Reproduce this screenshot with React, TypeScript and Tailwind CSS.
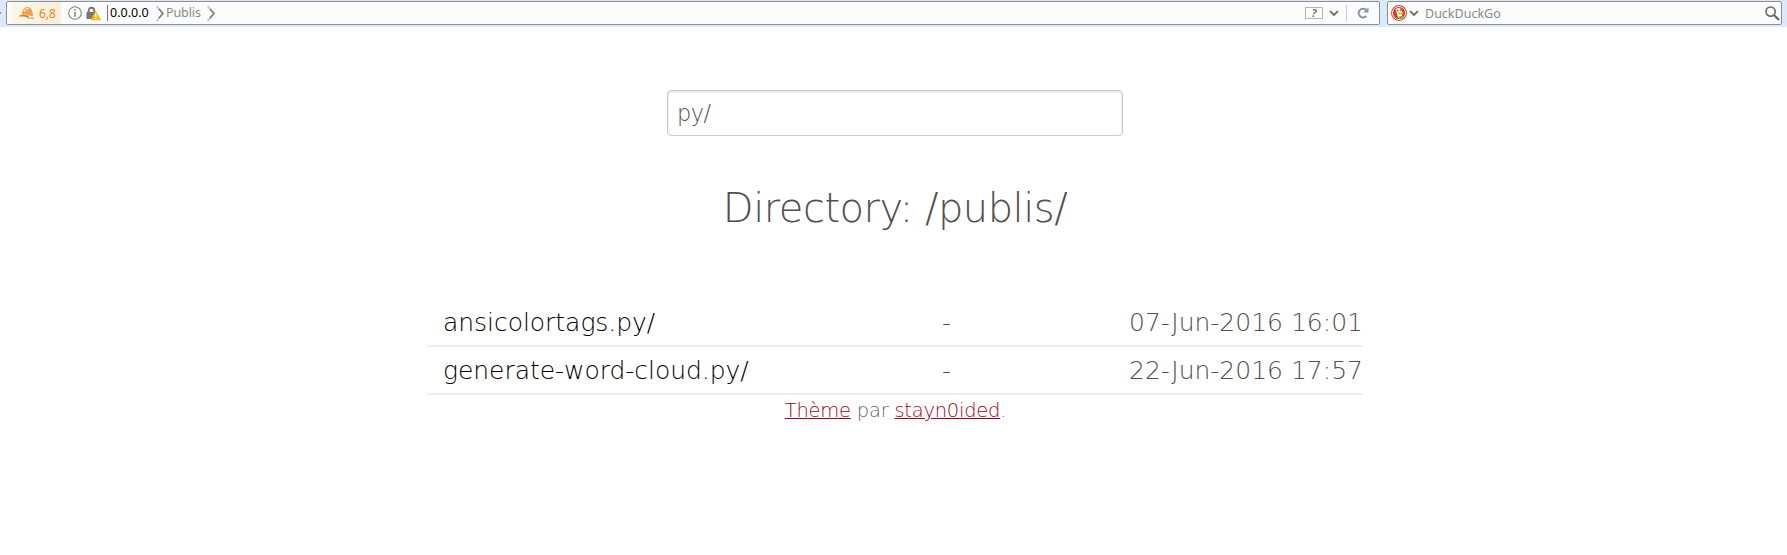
import React from "react";

const rows = [
  { name: "ansicolortags.py/", size: "-", date: "07-Jun-2016 16:01" },
  { name: "generate-word-cloud.py/", size: "-", date: "22-Jun-2016 17:57" },
];

function HardHat() {
  return (
    <svg width="16" height="16" viewBox="0 0 16 16">
      <path d="M3 9.500C3.500 4 6 2 8.500 2C12 2 14 5.500 14 11.500L9.500 10.500C8 9.500 5 9 3 9.500Z" fill="#efa04a" />
      <path d="M5.500 7C6 4.500 8 3 10 3.500" stroke="#fbd8a4" strokeWidth="1.500" fill="none" />
      <path d="M0.500 10.500C4 8.700 8.500 9.500 10 11.500L8.500 13C6.500 11.500 3 11.200 0.500 12Z" fill="#e07a28" />
      <path d="M8.500 13L15 13.500" stroke="#c9b8a0" strokeWidth="1.300" />
    </svg>
  );
}

function InfoIcon() {
  return (
    <svg width="14" height="14" viewBox="0 0 14 14">
      <circle cx="7" cy="7" r="6.300" fill="none" stroke="#858585" strokeWidth="1.100" />
      <path d="M7 3.200v1.600M7 6v4.800" stroke="#858585" strokeWidth="1.600" />
    </svg>
  );
}

function LockWarning() {
  return (
    <svg width="15" height="15" viewBox="0 0 15 15">
      <path d="M2.700 7V4.500a2.800 2.800 0 0 1 5.600 0V7" fill="none" stroke="#777" strokeWidth="1.900" />
      <rect x="0.500" y="6" width="10" height="7" rx="0.500" fill="#777" />
      <path d="M9.700 5.200L14.700 14H4.800Z" fill="#ffbf00" stroke="#f5b52a" strokeWidth="0.600" strokeLinejoin="round" />
      <path d="M9.700 7.800v3.300M9.700 12v1.300" stroke="#fff" strokeWidth="1.400" />
    </svg>
  );
}

function Crumb() {
  return (
    <svg width="10" height="17" viewBox="0 0 10 17">
      <path d="M1.500 1L8 8.500L1.500 16" fill="none" stroke="#c4c6c8" strokeWidth="1.800" />
      <path d="M4 4L8 8.500L4 13" fill="none" stroke="#6f7275" strokeWidth="1.200" />
    </svg>
  );
}

function Chevron() {
  return (
    <svg width="10" height="7" viewBox="0 0 10 7">
      <path d="M1 1.200L5 5L9 1.200" fill="none" stroke="#686868" strokeWidth="1.800" />
    </svg>
  );
}

function Reload() {
  return (
    <svg width="12" height="12" viewBox="0 0 12 12">
      <path d="M9.300 9A4.400 4.400 0 1 1 9 2.800" fill="none" stroke="#8c97a5" strokeWidth="2" />
      <path d="M11.500 0.300V5.500H6.200Z" fill="#8c97a5" />
    </svg>
  );
}

function Duck() {
  return (
    <svg width="16" height="16" viewBox="0 0 16 16">
      <circle cx="8" cy="8" r="7.900" fill="#d9391c" />
      <circle cx="8" cy="8" r="6.500" fill="none" stroke="#fff" strokeWidth="1" />
      <path d="M4.500 4.500C5.500 2.800 8.500 2.500 10 4C11 6 11.500 8 11 11L8.500 13.500C6.500 12 6 9 5.500 7Z" fill="#fff" />
      <circle cx="6.500" cy="5.500" r="0.800" fill="#29487d" />
      <circle cx="9.500" cy="5.300" r="0.800" fill="#29487d" />
      <path d="M7 7.500L12.500 7L11.500 9.500L7.500 9.700Z" fill="#f6c315" />
      <path d="M7.500 11.500L12 11V13L9 14Z" fill="#56ae3d" />
    </svg>
  );
}

function Search() {
  return (
    <svg width="15" height="15" viewBox="0 0 15 15">
      <circle cx="5.600" cy="5.600" r="4.600" fill="none" stroke="#666" strokeWidth="1.600" />
      <path d="M9 9L14 14" stroke="#666" strokeWidth="2.200" />
    </svg>
  );
}

export default function App() {
  return (
    <div className="h-[555px] w-full overflow-hidden bg-white">
      <header className="flex h-[27px] items-start bg-[#dce9f8] pt-px pr-[5px] font-['Noto_Sans','Open_Sans',sans-serif] text-[12px] leading-[22px]">
        <div className="mt-[11px] mr-[5px] h-[2px] w-px bg-[#8a949e]" />
        <div className="flex h-6 w-[1374px] items-center rounded-[2px] border border-[#8c8f93] bg-[#fcfcfc]">
          <div className="ml-[5px] flex h-full w-[49px] items-center bg-linear-to-r from-[#fcf6e8] to-[#faefd7] pl-[7px] text-[#ee8419]">
            <HardHat />
            <span className="ml-[4px] pt-px">6,8</span>
          </div>
          <div className="ml-[7px] flex items-center gap-[4px]">
            <InfoIcon />
            <LockWarning />
          </div>
          <div className="ml-[6px] h-[16px] w-px bg-[#777]" />
          <span className="ml-[2px] w-[45px] text-[12.500px] whitespace-nowrap text-black">0.0.0.0</span>
          <Crumb />
          <span className="ml-px w-[39px] text-[12.500px] tracking-[-0.100px] text-[#888]">Publis</span>
          <div className="ml-[1px] flex"><Crumb /></div>
          <div className="ml-auto flex items-center">
            <div className="flex h-[12px] w-[18px] items-center justify-center border border-[#b5b5b5] text-[11px] font-bold text-[#777] italic">?</div>
            <div className="ml-[6px]"><Chevron /></div>
            <div className="ml-[7px] h-[16px] w-px bg-[#ccc]" />
            <div className="mr-[10px] ml-[10px]"><Reload /></div>
          </div>
        </div>
        <div className="ml-[7px] flex h-6 w-[395px] items-center rounded-[2px] border border-[#8c8f93] bg-[#fcfcfc] pl-[3px]">
          <Duck />
          <div className="ml-[2px]"><Chevron /></div>
          <span className="ml-[6px] pt-px text-[12.500px] text-[#888]">DuckDuckGo</span>
          <div className="mr-px ml-auto"><Search /></div>
        </div>
      </header>

      <main className="ml-[427px] flex w-[936px] flex-col items-center font-['DejaVu_Sans_Light','DejaVu_Sans',sans-serif] font-extralight text-[#505050]">
        <input
          defaultValue="py/"
          className="mt-[63px] h-[46px] w-[456px] rounded-[4px] border border-[#ccc] bg-white px-[9px] text-[22.500px] tracking-[-0.5px] shadow-[inset_0_1px_3px_#ddd] outline-none"
        />
        <h1 className="mt-[42px] h-[60px] text-[40px] leading-[60px] font-extralight tracking-[-0.500px] whitespace-nowrap">Directory: /publis/</h1>
        <div className="mt-[61px] w-full text-[25px]">
          {rows.map((row) => (
            <div key={row.name} className="flex h-12 items-center border-b-2 border-[#ebeff5] pt-[2px] leading-[44px] whitespace-nowrap">
              <a className="w-[498px] pl-[16px] tracking-[-0.040px] text-black">{row.name}</a>
              <span className="w-[43px] text-center">{row.size}</span>
              <span className="ml-auto">{row.date}</span>
            </div>
          ))}
        </div>
        <p className="pt-px pl-px text-[19.500px] leading-[30px] tracking-[-0.240px] text-[#666]">
          <a className="text-[#a6001a] underline">Thème</a> par <a className="text-[#a6001a] underline">stayn0ided</a>.
        </p>
      </main>
    </div>
  );
}
